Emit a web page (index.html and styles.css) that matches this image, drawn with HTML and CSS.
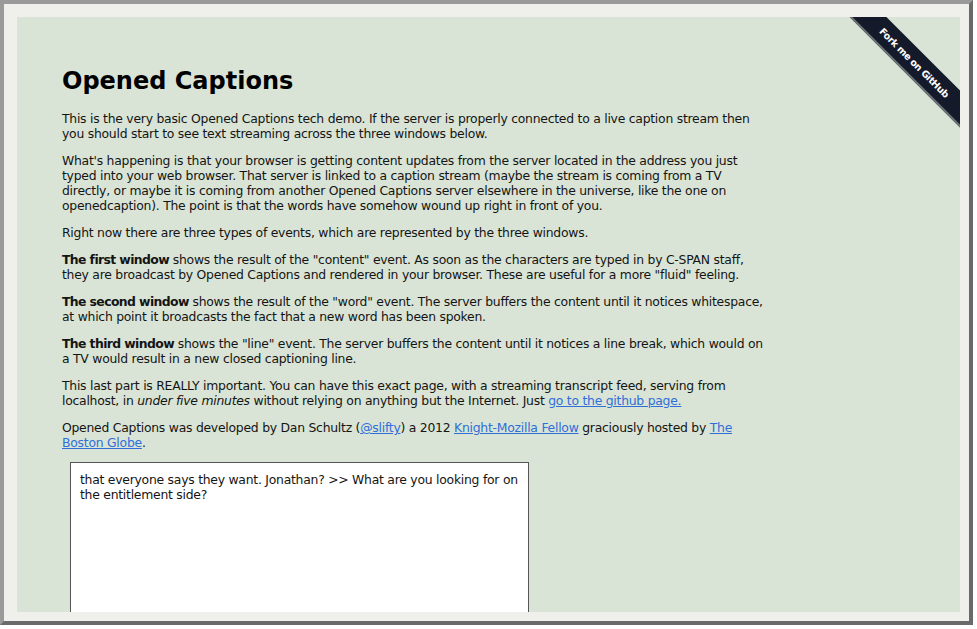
FILE: index.html
```html
<!DOCTYPE html>
<html>
<head>
<meta charset="utf-8">
<title>Opened Captions</title>
<link rel="stylesheet" href="styles.css">
</head>
<body>
<div class="frame">
  <div class="page">
    <a class="ribbon" href="#">Fork me on GitHub</a>
    <div class="content">
      <h1 class="title">Opened Captions</h1>
      <p>This is the very basic Opened Captions tech demo. If the server is properly connected to a live caption stream then<br>you should start to see text streaming across the three windows below.</p>
      <p>What's happening is that your browser is getting content updates from the server located in the address you just<br>typed into your web browser. That server is linked to a caption stream (maybe the stream is coming from a TV<br>directly, or maybe it is coming from another Opened Captions server elsewhere in the universe, like the one on<br>openedcaption). The point is that the words have somehow wound up right in front of you.</p>
      <p>Right now there are three types of events, which are represented by the three windows.</p>
      <p><b>The first window</b> shows the result of the "content" event. As soon as the characters are typed in by C-SPAN staff,<br>they are broadcast by Opened Captions and rendered in your browser. These are useful for a more "fluid" feeling.</p>
      <p><b>The second window</b> shows the result of the "word" event. The server buffers the content until it notices whitespace,<br>at which point it broadcasts the fact that a new word has been spoken.</p>
      <p><b>The third window</b> shows the "line" event. The server buffers the content until it notices a line break, which would on<br>a TV would result in a new closed captioning line.</p>
      <p>This last part is REALLY important. You can have this exact page, with a streaming transcript feed, serving from<br>localhost, in <i>under five minutes</i> without relying on anything but the Internet. Just <a class="link" href="#">go to the github page.</a></p>
      <p>Opened Captions was developed by Dan Schultz (<a class="link" href="#">@slifty</a>) a 2012 <a class="link" href="#">Knight-Mozilla Fellow</a> graciously hosted by <a class="link" href="#">The<br>Boston Globe</a>.</p>
      <div class="caption-box">that everyone says they want. Jonathan? &gt;&gt; What are you looking for on<br>the entitlement side?</div>
    </div>
  </div>
</div>
</body>
</html>
```
FILE: styles.css
```css
html, body {
  margin: 0;
  padding: 0;
  background: #ffffff;
}
.frame {
  box-sizing: border-box;
  width: 973px;
  height: 625px;
  border: 4px solid #8a8a8a;
  border-top-color: #9a9a9a;
  border-left-color: #9a9a9a;
  border-right-color: #6a6a6a;
  border-bottom-color: #6a6a6a;
  background: #efefeb;
  padding: 13px 9px 9px 13px;
}
.page {
  position: relative;
  width: 943px;
  height: 595px;
  background: #d9e4d6;
  overflow: hidden;
}
.content {
  width: 760px;
  padding: 48px 0 0 45px;
  font-family: "DejaVu Sans", Verdana, sans-serif;
  font-size: 12.4px;
  letter-spacing: -0.25px;
  line-height: 15px;
  color: #141414;
}
.title {
  margin: 0 0 14px 0;
  font-size: 24px;
  line-height: 32px;
  font-weight: bold;
  letter-spacing: 0;
  color: #000;
}
.content p {
  margin: 0 0 12px 0;
}
.content b {
  letter-spacing: -0.6px;
}
.link {
  color: #2f6fd8;
  text-decoration: underline;
}
.caption-box {
  box-sizing: border-box;
  width: 459px;
  height: 200px;
  margin-left: 8px;
  margin-top: 11px;
  padding: 9px 9px;
  background: #ffffff;
  border: 1px solid #555;
  color: #141414;
}
.ribbon {
  position: absolute;
  top: 33px;
  right: -34px;
  width: 160px;
  height: 26px;
  box-sizing: border-box;
  line-height: 25px;
  transform: rotate(45deg);
  background: #141a2a;
  border-bottom: 2px solid #6f7478;
  color: #ffffff;
  font-family: "DejaVu Sans", sans-serif;
  font-weight: bold;
  font-size: 9.5px;
  letter-spacing: -0.4px;
  text-align: center;
  text-decoration: none;
}
```
